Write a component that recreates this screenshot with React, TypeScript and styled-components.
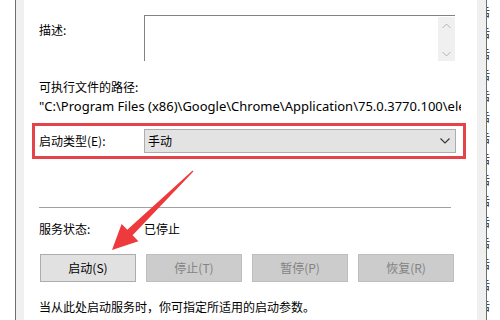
import React from "react";
import styled, { createGlobalStyle } from "styled-components";

const Global = createGlobalStyle`
  html, body { margin: 0; padding: 0; background: #ffffff; }
  #root { width: 500px; height: 320px; overflow: hidden; }
`;

const CJK = `"Noto Sans CJK SC", "Noto Sans", sans-serif`;

const Screen = styled.div`
  display: flex;
  width: 500px;
  height: 320px;
  background: #ffffff;
  overflow: hidden;
  font-family: ${CJK};
  font-size: 12px;
  color: #000000;
`;

const LeftBackdrop = styled.div`
  width: 15px;
  flex: none;
  background: #ffffff;
`;

const RightBackdrop = styled.div`
  width: 13px;
  flex: none;
  background: #ffffff;
  overflow: hidden;
  padding-top: 4px;
  box-sizing: border-box;
`;

const Fragment = styled.div`
  height: 21px;
  line-height: 16px;
  margin-left: -8px;
  font-size: 11px;
  color: #222;
  white-space: nowrap;
`;

const Dialog = styled.div`
  display: flex;
  flex: none;
  width: 472px;
  box-sizing: border-box;
  border-left: 1px solid #6f6f6f;
  border-right: 1px solid #6f6f6f;
  background: #f0f0f0;
  padding: 0 9px 0 8px;
`;

const Page = styled.div`
  flex: 1;
  min-width: 0;
  background: #ffffff;
  padding: 15px 22px 0 15px;
  position: relative;
`;

const FieldRow = styled.div<{ $labelTop?: number }>`
  display: grid;
  grid-template-columns: 105px 1fr;
  align-items: start;
  & > span:first-child {
    padding-top: ${(p) => p.$labelTop ?? 0}px;
  }
`;

const Label = styled.span`
  line-height: 16px;
  white-space: nowrap;
`;

const TextBox = styled.div`
  display: flex;
  justify-content: flex-end;
  height: 46px;
  border-top: 1px solid #828282;
  border-left: 1px solid #828282;
  box-sizing: border-box;
`;

const ScrollTrack = styled.div`
  width: 17px;
  margin-top: 1px;
  background: #f0f0f0;
  display: flex;
  flex-direction: column;
  justify-content: space-between;
  align-items: center;
  padding: 6px 0 4px;
`;

const BlockLabel = styled.div<{ $mt: number }>`
  margin-top: ${(p) => p.$mt}px;
  line-height: 16px;
  white-space: nowrap;
`;

const PathText = styled.div`
  margin: 3px -6px 0 0;
  line-height: 16px;
  white-space: nowrap;
  overflow: hidden;
  font-family: "Noto Sans", "Noto Sans CJK SC", sans-serif;
  font-size: 13px;
`;

const Highlight = styled.div`
  margin: 9px -11px 0 -7px;
  height: 36px;
  box-sizing: border-box;
  border: 3px solid #e5434a;
  padding: 0 7px 0 4px;
  display: grid;
  grid-template-columns: 105px 1fr;
  align-items: center;
`;

const Combo = styled.div`
  height: 24px;
  box-sizing: border-box;
  border: 1px solid #adadad;
  background: #e3e3e3;
  display: flex;
  align-items: center;
  justify-content: space-between;
  padding: 0 5px 0 3px;
  line-height: 16px;
`;

const Separator = styled.div`
  margin-top: 48px;
  height: 1px;
  width: 412px;
  background: #a0a0a0;
`;

const StatusRow = styled(FieldRow)`
  margin-top: 13px;
`;

const ButtonRow = styled.div`
  margin-top: 17px;
  margin-left: 1px;
  display: flex;
  gap: 10px;
`;

const Btn = styled.div<{ $disabled?: boolean }>`
  width: 96px;
  height: 28px;
  box-sizing: border-box;
  border: 1px solid ${(p) => (p.$disabled ? "#bfbfbf" : "#adadad")};
  background: ${(p) => (p.$disabled ? "#cccccc" : "#e1e1e1")};
  color: ${(p) => (p.$disabled ? "#838383" : "#000000")};
  display: flex;
  align-items: center;
  justify-content: center;
  line-height: 16px;
`;

const Note = styled.div`
  margin-top: 17px;
  line-height: 16px;
  white-space: nowrap;
`;

const ArrowLayer = styled.svg`
  position: absolute;
  left: -24px;
  top: 0;
  width: 500px;
  height: 320px;
  pointer-events: none;
`;

const Chevron = ({ up, color }: { up?: boolean; color: string }) => (
  <svg width="9" height="6" viewBox="0 0 9 6">
    <polyline
      points={up ? "0.5,5 4.5,1 8.5,5" : "0.5,1 4.5,5 8.5,1"}
      fill="none"
      stroke={color}
      strokeWidth="1"
    />
  </svg>
);

const PATH =
  '"C:\\Program Files (x86)\\Google\\Chrome\\Application\\75.0.3770.100\\elevation_service.exe"';

export default function App() {
  return (
    <>
      <Global />
      <Screen>
        <LeftBackdrop />
        <Dialog>
          <Page>
            <FieldRow $labelTop={7}>
              <Label>描述:</Label>
              <TextBox>
                <ScrollTrack>
                  <Chevron up color="#b4b4b4" />
                  <Chevron color="#b4b4b4" />
                </ScrollTrack>
              </TextBox>
            </FieldRow>
            <BlockLabel $mt={18}>可执行文件的路径:</BlockLabel>
            <PathText>{PATH}</PathText>
            <Highlight>
              <Label>启动类型(E):</Label>
              <Combo>
                <span>手动</span>
                <svg width="10" height="6" viewBox="0 0 10 6">
                  <polyline points="0.5,0.5 5,5 9.5,0.5" fill="none" stroke="#333" strokeWidth="1.1" />
                </svg>
              </Combo>
            </Highlight>
            <Separator />
            <StatusRow>
              <Label>服务状态:</Label>
              <Label>已停止</Label>
            </StatusRow>
            <ButtonRow>
              <Btn>启动(S)</Btn>
              <Btn $disabled>停止(T)</Btn>
              <Btn $disabled>暂停(P)</Btn>
              <Btn $disabled>恢复(R)</Btn>
            </ButtonRow>
            <Note>当从此处启动服务时，你可指定所适用的启动参数。</Note>
            <ArrowLayer viewBox="0 0 500 320">
              <polygon
                points="193.4,171.4 132.6,235.2 138.4,241.2 112,250 121.6,224 127.3,229.8 192.6,170.6"
                fill="#ee3a3d"
              />
            </ArrowLayer>
          </Page>
        </Dialog>
        <RightBackdrop>
          {Array.from({ length: 15 }).map((_, i) => (
            <Fragment key={i}>后</Fragment>
          ))}
        </RightBackdrop>
      </Screen>
    </>
  );
}
